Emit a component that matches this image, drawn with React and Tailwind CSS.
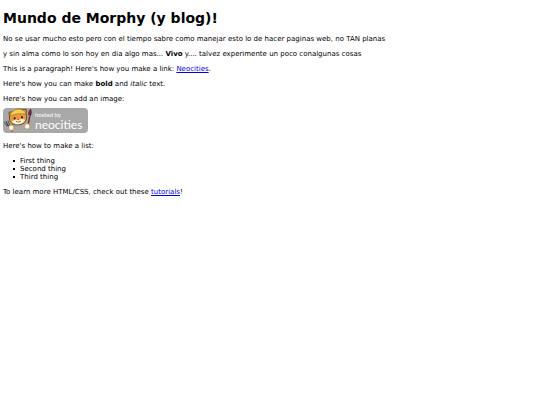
function HostedBadge() {
  return (
    <svg viewBox="0 0 85 25" className="block h-[25px] w-[85px]" role="img" aria-label="hosted by neocities">
      <rect width="85" height="25" rx="4" fill="#a8a8a8" />
      {/* fork */}
      <g stroke="#3c4248" fill="none" strokeLinecap="round" strokeLinejoin="round">
        <path d="M1.2 14.5l2.4 3.2 3-.6L5.2 13" strokeWidth="0.8" />
        <path d="M3 13.6l2 4 4 5.6" strokeWidth="1.2" />
      </g>
      {/* brush */}
      <path d="M26.6 8.5L24.8 19.5" stroke="#6a3424" strokeWidth="1.5" strokeLinecap="round" />
      <path d="M25.6 7q-.5-3.4 2-6q1.5 3 .2 6.4z" fill="#8e2430" stroke="#3f1c1c" strokeWidth="0.6" />
      {/* cat */}
      <path
        d="M6.5 9L6 4.4 9.6 3.6Q14-.4 20 1.4L23.4 1.6 23.2 6Q25 11 21.6 14.6Q16 18.6 9.2 15.8Q5.6 13 6.5 9z"
        fill="#eb9a3a"
        stroke="#5b3a14"
        strokeWidth="0.8"
      />
      <path d="M7.2 7.8Q9 1.2 15.8 1.1Q21.6 1.6 22.8 6Q15 4.6 7.2 7.8z" fill="#f1cf58" stroke="#a8741f" strokeWidth="0.6" />
      <path d="M8.6 13.4Q11.6 11.8 15.2 11.6Q19 10.4 22.2 11.8Q20.8 15.6 15.4 16.2Q10.8 16.2 8.6 13.4z" fill="#fff1da" />
      <ellipse cx="11.6" cy="10.2" rx="0.9" ry="1.2" fill="#33200f" />
      <ellipse cx="19" cy="9.2" rx="0.9" ry="1.2" fill="#33200f" />
      <path d="M14.4 11.2h2l-1 1.2z" fill="#7a3018" />
      <path d="M13 13.4q2.6 1.8 5-.4" stroke="#7a3018" strokeWidth="0.7" fill="none" />
      {/* paws */}
      <circle cx="8.2" cy="19.8" r="2.8" fill="#fff4e2" stroke="#b07a3c" strokeWidth="0.7" />
      <circle cx="24.2" cy="18.4" r="2.8" fill="#fff4e2" stroke="#b07a3c" strokeWidth="0.7" />
      <g fill="#fff" fontFamily="Lato, 'Open Sans', sans-serif">
        <text x="32" y="9" fontSize="6">hosted by</text>
        <text x="32" y="21" fontSize="12">neocities</text>
      </g>
    </svg>
  );
}

function ListItem({ children }) {
  return (
    <li className="flex items-center gap-[5px] before:size-[2px] before:bg-black before:content-['']">
      {children}
    </li>
  );
}

export default function App() {
  return (
    <main className="flex flex-col gap-[7px] bg-white px-[3px] pt-[9px] pb-2 font-['DejaVu_Sans',Verdana,sans-serif] text-[7px] leading-[8px] text-black">
      <h1 className="mb-[1px] text-[14px] leading-[18px] font-bold">Mundo de Morphy (y blog)!</h1>

      <p>No se usar mucho esto pero con el tiempo sabre como manejar esto lo de hacer paginas web, no TAN planas</p>
      <p>
        y sin alma como lo son hoy en dia algo mas... <strong>Vivo</strong> y.... talvez experimente un poco conalgunas cosas
      </p>
      <p>
        This is a paragraph! Here's how you make a link:{" "}
        <a href="https://neocities.org" className="text-[#0000ee] underline">Neocities</a>.
      </p>
      <p>
        Here's how you can make <strong>bold</strong> and <em>italic</em> text.
      </p>

      <div className="flex flex-col gap-[5px] pb-[2px]">
        <p>Here's how you can add an image:</p>
        <HostedBadge />
      </div>

      <p>Here's how to make a list:</p>
      <ul className="pl-[10px]">
        <ListItem>First thing</ListItem>
        <ListItem>Second thing</ListItem>
        <ListItem>Third thing</ListItem>
      </ul>

      <p>
        To learn more HTML/CSS, check out these{" "}
        <a href="https://neocities.org/tutorials" className="text-[#0000ee] underline">tutorials</a>!
      </p>
    </main>
  );
}
